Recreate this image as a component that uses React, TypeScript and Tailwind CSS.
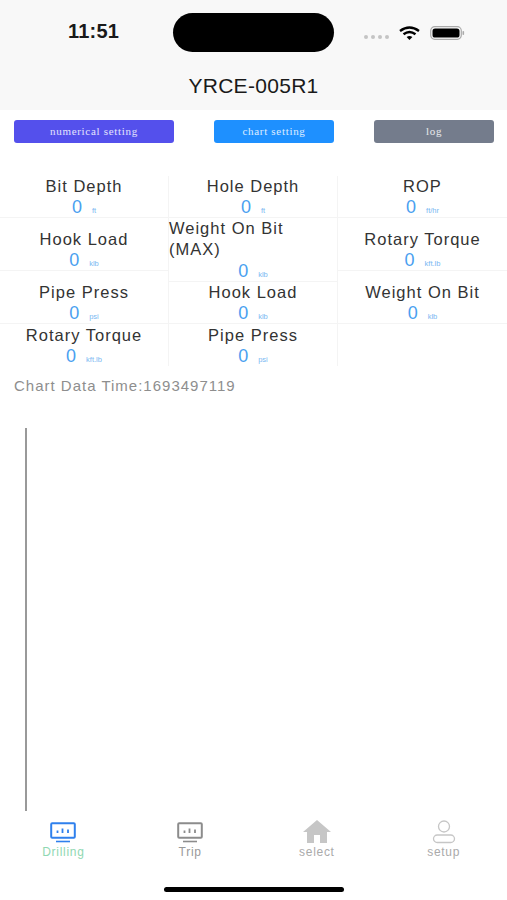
const sans = "font-['Liberation_Sans',Arial,sans-serif]";

function Metric({ title, value = '0', unit, h, wrapped = false, last = false }: { title: string; value?: string; unit: string; h: string; wrapped?: boolean; last?: boolean }) {
  return (
    <div className={last ? `${h} flex flex-col justify-end` : `${h} flex flex-col justify-end border-b border-[#f4f4f4]`}>
      <div className={wrapped ? 'mb-px text-left text-[16.5px] leading-[21px] tracking-[1px] text-[#333]' : 'text-center text-[16.5px] leading-[22px] tracking-[1px] text-[#333]'}>{title}</div>
      <div className="flex h-[20px] items-baseline justify-center gap-[9px] text-[#4a9ff0]">
        <span className="text-[18px] leading-[20px] tracking-[1px]">{value}</span>
        <span className="text-[7.5px] leading-[20px] text-[#7ab8f2]">{unit}</span>
      </div>
    </div>
  );
}

function Monitor({ color }: { color: string }) {
  return (
    <svg width="26" height="21" viewBox="0 0 26 21" fill="none">
      <rect x="1.2" y="1.2" width="23.6" height="14.6" rx="1" stroke={color} strokeWidth="2" />
      <path d="M7.5 8.5v2.5M12.5 6.5v4.5M18 7.5v3.5" stroke={color} strokeWidth="1.8" />
      <path d="M6 19.5h14" stroke={color} strokeWidth="1.6" />
    </svg>
  );
}

function Tab({ label, color, children }: { label: string; color: string; children: React.ReactNode }) {
  return (
    <div className="flex flex-col items-center">
      <div className="flex h-[26px] items-center justify-center">{children}</div>
      <div className={`text-[12px] leading-[14px] tracking-[0.7px] ${color}`}>{label}</div>
    </div>
  );
}

export default function App() {
  return (
    <div className={`${sans} flex h-[900px] w-[507px] flex-col overflow-hidden bg-white`}>
      <header className="h-[110px] bg-[#f8f8f8]">
        <div className="box-content flex h-[39px] items-center pt-[13px]">
          <div className="mb-[3px] w-[173px] pl-[68px] text-[20px] font-bold leading-none tracking-[0.2px] text-[#1a1a1a]">11:51</div>
          <div className="h-[39px] w-[161px] rounded-full bg-black" />
          <div className="ml-[30px] flex items-center">
            <div className="mt-[8px] flex gap-[3px]">
              <span className="h-[4px] w-[4px] rounded-full bg-[#c4c4c4]" />
              <span className="h-[4px] w-[4px] rounded-full bg-[#c4c4c4]" />
              <span className="h-[4px] w-[4px] rounded-full bg-[#c4c4c4]" />
              <span className="h-[4px] w-[4px] rounded-full bg-[#c4c4c4]" />
            </div>
            <svg className="ml-[10px]" width="21" height="14" viewBox="0 0 21 14" fill="none">
              <path d="M1 5Q10.5 -2 20 5" stroke="#000" strokeWidth="2.4" />
              <path d="M4.5 8.2Q10.5 3.6 16.5 8.2" stroke="#000" strokeWidth="2.4" />
              <path d="M7.6 11Q10.5 8.8 13.4 11L10.5 14Z" fill="#000" />
            </svg>
            <svg className="ml-[10px]" width="36" height="14" viewBox="0 0 36 14" fill="none">
              <rect x="0.7" y="0.7" width="30.6" height="12.6" rx="4" stroke="#aaa" strokeWidth="1.2" />
              <rect x="2.5" y="2.5" width="27" height="9" rx="2.6" fill="#000" />
              <rect x="32.5" y="5" width="1.6" height="4" rx="0.8" fill="#aaa" />
            </svg>
          </div>
        </div>
        <div className="mt-[22px] text-center text-[21px] leading-[24px] tracking-[0.3px] text-[#1a1a1a]">YRCE-005R1</div>
      </header>

      <div className="mt-[10px] flex justify-between pl-[14px] pr-[13px] font-['Liberation_Serif',serif] text-[11px] tracking-[0.7px] text-white/85">
        <button className="h-[23px] w-[160px] rounded-[3px] bg-[#5450ec]">numerical setting</button>
        <button className="h-[23px] w-[120px] rounded-[3px] bg-[#1e90ff]">chart setting</button>
        <button className="h-[23px] w-[120px] rounded-[3px] bg-[#747c8c]">log</button>
      </div>

      <div className="mt-[33px] grid grid-cols-3 items-start">
        <div className="border-r border-[#f4f4f4]">
          <Metric h="h-[42px]" title="Bit Depth" unit="ft" />
          <Metric h="h-[53px]" title="Hook Load" unit="klb" />
          <Metric h="h-[53px]" title="Pipe Press" unit="psi" />
          <Metric h="h-[42px]" title="Rotary Torque" unit="kft.lb" last />
        </div>
        <div className="border-r border-[#f4f4f4]">
          <Metric h="h-[42px]" title="Hole Depth" unit="ft" />
          <Metric h="h-[64px]" title="Weight On Bit (MAX)" unit="klb" wrapped />
          <Metric h="h-[42px]" title="Hook Load" unit="klb" />
          <Metric h="h-[42px]" title="Pipe Press" unit="psi" last />
        </div>
        <div className="-ml-px border-l border-[#f4f4f4]">
          <Metric h="h-[42px]" title="ROP" unit="ft/hr" />
          <Metric h="h-[53px]" title="Rotary Torque" unit="kft.lb" />
          <Metric h="h-[53px]" title="Weight On Bit" unit="klb" />
        </div>
      </div>

      <div className="mt-[11px] pl-[14px] text-[15px] leading-[18px] tracking-[1px] text-[#8e8e8e]">Chart Data Time:1693497119</div>

      <div className="mt-[33px] ml-[25px] h-[383px] w-[2px] bg-[#999]" />

      <nav className="mt-[8px] grid grid-cols-4">
        <Tab label="Drilling" color="text-[#8fd8b2]"><Monitor color="#2f80ed" /></Tab>
        <Tab label="Trip" color="text-[#999]"><Monitor color="#8c8c8c" /></Tab>
        <Tab label="select" color="text-[#aaa]">
          <svg width="28" height="24" viewBox="0 0 28 24">
            <path d="M14 0L28 12H24V23H17V15H11V23H4V12H0Z" fill="#c6c6c6" />
          </svg>
        </Tab>
        <Tab label="setup" color="text-[#aaa]">
          <svg width="24" height="24" viewBox="0 0 24 24" fill="none" stroke="#c6c6c6" strokeWidth="1.3">
            <circle cx="12" cy="6.5" r="5.5" />
            <rect x="1.5" y="15" width="21" height="7.5" rx="3.75" />
          </svg>
        </Tab>
      </nav>

      <div className="mx-auto mt-[28px] h-[5px] w-[180px] rounded-full bg-black" />
    </div>
  );
}
